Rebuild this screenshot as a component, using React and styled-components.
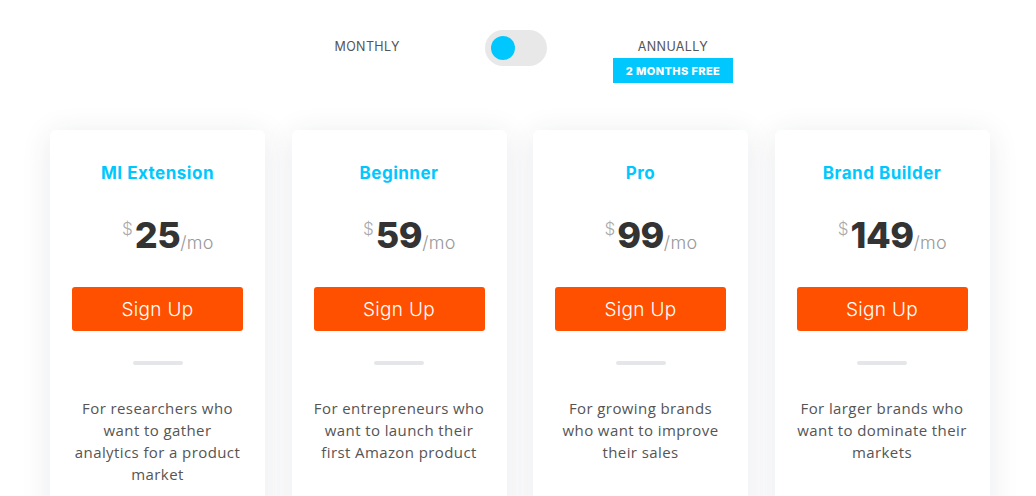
import styled, { createGlobalStyle } from "styled-components";

const GlobalStyle = createGlobalStyle`
  html, body {
    margin: 0;
    padding: 0;
    background: #ffffff;
    overflow: hidden;
  }
  body {
    font-family: "Inter", "Noto Sans", sans-serif;
  }
`;

const Page = styled.div`
  width: 1036px;
  height: 496px;
  overflow: hidden;
  display: flex;
  flex-direction: column;
`;

const BillingRow = styled.div`
  flex-shrink: 0;
  display: grid;
  grid-template-columns: 1fr auto 1fr;
  align-items: start;
  padding: 30px 4px 0 0;
  height: 100px;
  box-sizing: border-box;
`;

const Period = styled.div`
  font-size: 12.5px;
  color: #555;
  letter-spacing: 0.4px;
  line-height: 16px;
`;

const LeftSide = styled.div`
  display: flex;
  justify-content: flex-end;
  padding: 9px 85px 0 0;
`;

const RightSide = styled.div`
  display: flex;
  flex-direction: column;
  align-items: center;
  width: 120px;
  margin-left: 66px;
  padding-top: 9px;
  gap: 3px;
`;

const Toggle = styled.div`
  width: 62px;
  height: 36px;
  border-radius: 18px;
  background: #e8e8e8;
  display: flex;
  align-items: center;
  padding-left: 6px;
  box-sizing: border-box;
`;

const Knob = styled.div`
  width: 24px;
  height: 24px;
  border-radius: 50%;
  background: #00c8ff;
`;

const Badge = styled.div`
  width: 120px;
  height: 25px;
  background: #00c8ff;
  color: #fff;
  font-size: 11px;
  font-weight: 800;
  letter-spacing: 0.4px;
  display: flex;
  align-items: center;
  justify-content: center;
`;

const Cards = styled.div`
  flex-shrink: 0;
  display: flex;
  gap: 26.5px;
  padding: 30px 0 0 50px;
`;

const Card = styled.div`
  width: 215px;
  height: 400px;
  background: #fff;
  border-radius: 6px;
  box-shadow: 0 4px 30px rgba(40, 50, 80, 0.1);
  display: flex;
  flex-direction: column;
  align-items: center;
  padding: 33px 22px 0;
  box-sizing: border-box;
`;

const Title = styled.div`
  color: #00c8ff;
  font-size: 17px;
  font-weight: 700;
  letter-spacing: 0.5px;
  line-height: 20px;
`;

const Price = styled.div`
  display: grid;
  grid-template-columns: 1fr auto 1fr;
  align-items: start;
  width: 100%;
  margin-top: 30px;
  height: 44px;
`;

const Dollar = styled.span`
  justify-self: end;
  font-size: 17px;
  color: #aaa;
  font-weight: 300;
  margin-top: 6px;
  margin-right: 2px;
`;

const Amount = styled.span`
  font-size: 36px;
  font-weight: 800;
  color: #333;
  line-height: 44px;
  letter-spacing: -0.5px;
`;

const Per = styled.span`
  justify-self: start;
  font-size: 18px;
  color: #999;
  font-weight: 300;
  margin-top: 19px;
  letter-spacing: 0.3px;
`;

const Button = styled.button`
  width: 171px;
  height: 44px;
  margin-top: 30px;
  border: none;
  border-radius: 3px;
  background: #ff5000;
  color: #fff;
  font-family: inherit;
  font-size: 19px;
  font-weight: 300;
  letter-spacing: 0.3px;
  cursor: pointer;
`;

const Divider = styled.div`
  width: 50px;
  height: 4px;
  border-radius: 2px;
  background: #e5e6ea;
  margin-top: 30px;
`;

const Description = styled.p`
  margin: 32px 0 0;
  font-family: "Open Sans", "Noto Sans", sans-serif;
  font-size: 15px;
  letter-spacing: 0.4px;
  line-height: 22px;
  color: #555;
  text-align: center;
`;

const plans = [
  { name: "MI Extension", price: 25, text: "For researchers who want to gather analytics for a product market" },
  { name: "Beginner", price: 59, text: "For entrepreneurs who want to launch their first Amazon product" },
  { name: "Pro", price: 99, text: "For growing brands who want to improve their sales" },
  { name: "Brand Builder", price: 149, text: "For larger brands who want to dominate their markets" },
];

const App = () => (
  <Page>
    <GlobalStyle />
    <BillingRow>
      <LeftSide>
        <Period>MONTHLY</Period>
      </LeftSide>
      <Toggle>
        <Knob />
      </Toggle>
      <RightSide>
        <Period>ANNUALLY</Period>
        <Badge>2 MONTHS FREE</Badge>
      </RightSide>
    </BillingRow>
    <Cards>
      {plans.map((p) => (
        <Card key={p.name}>
          <Title>{p.name}</Title>
          <Price>
            <Dollar>$</Dollar>
            <Amount>{p.price}</Amount>
            <Per>/mo</Per>
          </Price>
          <Button>Sign Up</Button>
          <Divider />
          <Description>{p.text}</Description>
        </Card>
      ))}
    </Cards>
  </Page>
);

export default App;
